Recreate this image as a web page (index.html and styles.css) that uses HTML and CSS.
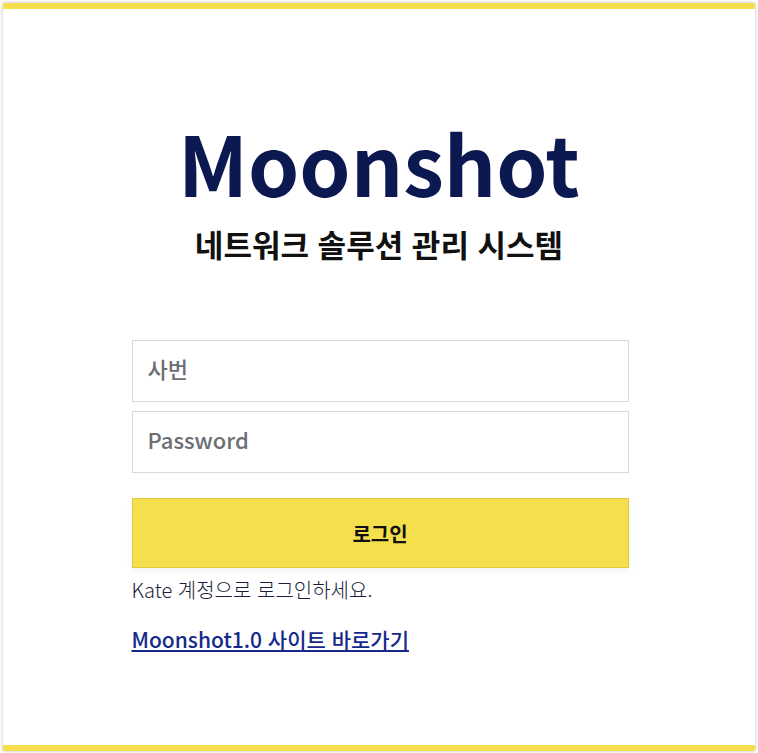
FILE: index.html
```html
<!DOCTYPE html>
<html lang="ko">
<head>
<meta charset="utf-8">
<link rel="stylesheet" href="styles.css">
</head>
<body>
<div class="card">
  <div class="header">
    <h1 class="logo">Moonshot</h1>
    <p class="subtitle">네트워크 솔루션 관리 시스템</p>
  </div>
  <form class="form">
    <input class="field" type="text" placeholder="사번">
    <input class="field" type="password" placeholder="Password">
    <button class="btn" type="button">로그인</button>
    <p class="hint">Kate 계정으로 로그인하세요.</p>
    <a class="link" href="#">Moonshot1.0 사이트 바로가기</a>
  </form>
</div>
</body>
</html>
```
FILE: styles.css
```css
* { box-sizing: border-box; }
html, body { margin: 0; padding: 0; background: #ffffff; }
body {
  font-family: "Noto Sans CJK KR", "Noto Sans", sans-serif;
  padding: 3px;
  height: 753px;
  overflow: hidden;
}
.card {
  height: 748px;
  width: 752px;
  background: #fff;
  border-top: 6px solid #f5df4d;
  border-bottom: 6px solid #f5df4d;
  box-shadow: 0 0 4px rgba(0,0,0,0.25);
  display: flex;
  flex-direction: column;
  align-items: center;
}
.header {
  padding-top: 112px;
  display: flex;
  flex-direction: column;
  align-items: center;
}
.logo {
  margin: 0;
  font-size: 82px;
  font-weight: 700;
  line-height: 82px;
  color: #0c1850;
}
.subtitle {
  margin: 21px 0 0;
  font-size: 31px;
  font-weight: 700;
  color: #111;
  line-height: 40px;
}
.form {
  margin-top: 76px;
  width: 497px;
  margin-left: 2px;
  display: flex;
  flex-direction: column;
}
.field {
  height: 62px;
  border: 1px solid #d9d9d9;
  padding: 0 15px 6px;
  font-family: inherit;
  font-size: 22px;
  font-weight: 500;
  color: #333;
  outline: none;
  margin-bottom: 9px;
}
.field::placeholder { color: #6b6e73; }
.btn {
  margin-top: 16px;
  height: 70px;
  background: #f5df4d;
  border: 1px solid #e2c83a;
  font-family: inherit;
  font-size: 20px;
  font-weight: 700;
  color: #111;
  box-shadow: 0 3px 6px rgba(0,0,0,0.06);
}
.hint {
  margin: 8px 0 0;
  font-size: 20px;
  font-weight: 300;
  color: #1a1d3a;
  line-height: 28px;
}
.link {
  margin-top: 20px;
  align-self: flex-start;
  font-size: 21px;
  font-weight: 500;
  color: #15298a;
  text-decoration: underline;
  line-height: 30px;
}
```
